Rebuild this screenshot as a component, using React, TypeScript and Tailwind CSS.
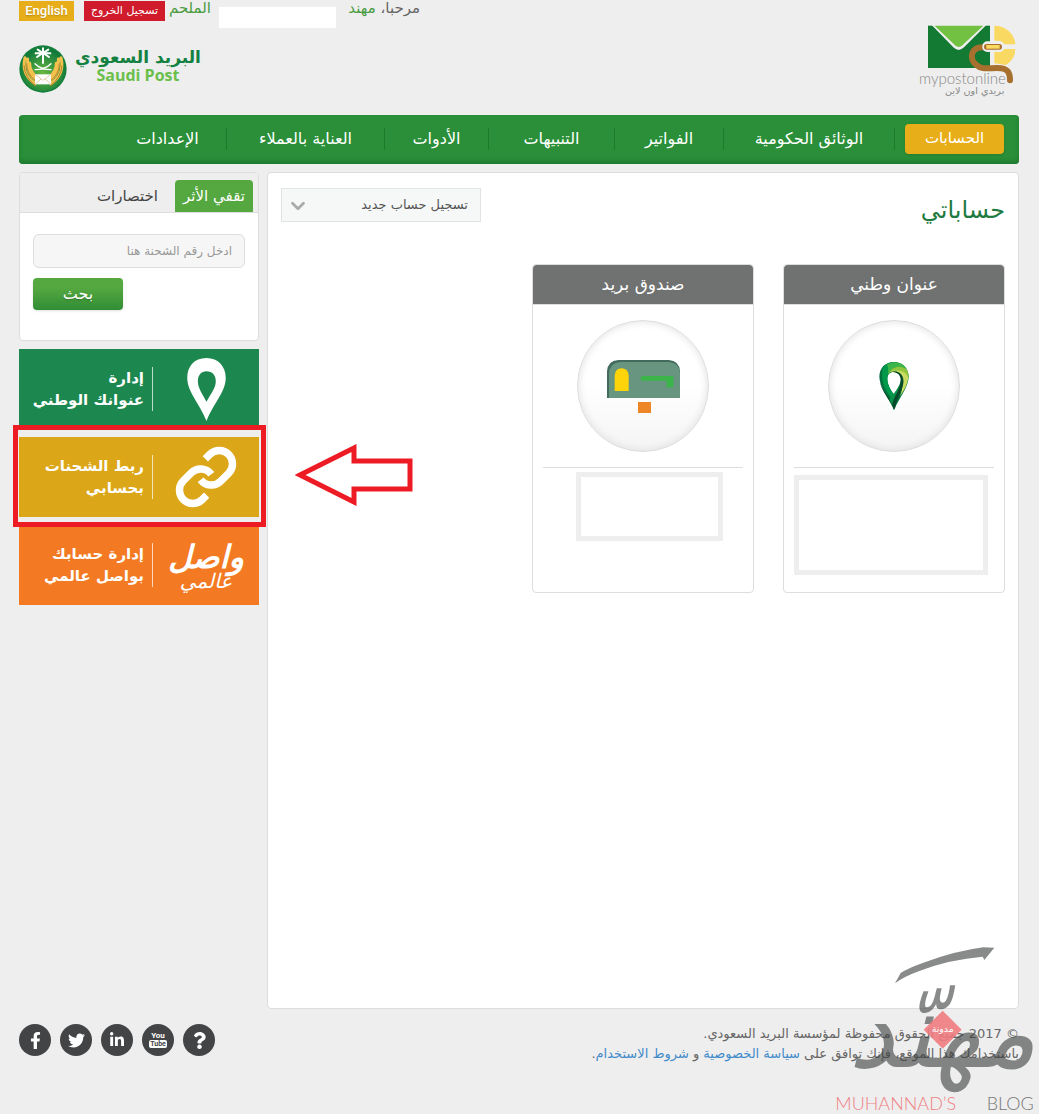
import React, { useState } from 'react';
import { ChevronDown, Link as LinkIcon } from 'lucide-react';
import { FaFacebookF, FaTwitter, FaLinkedinIn, FaQuestion } from 'react-icons/fa';

const navItems = [
  { label: 'الوثائق الحكومية', width: 'w-[171px]' },
  { label: 'الفواتير', width: 'w-[109px]' },
  { label: 'التنبيهات', width: 'w-[126px]' },
  { label: 'الأدوات', width: 'w-[104px]' },
  { label: 'العناية بالعملاء', width: 'w-[158px]' },
  { label: 'الإعدادات', width: 'w-[118px]' },
];

const MyPostLogo = () => (
  <svg viewBox="57 42 300 225" className="h-[75px] w-[100px]" direction="ltr" role="img" aria-label="mypostonline">
    <rect x="84" y="47" width="186" height="127" fill="#137a33" />
    <path d="M92 42L160 112Q176 128 192 112L262 42Z" fill="#eee" />
    <path d="M104 47L165 106Q176 116 187 106L250 47Z" fill="#72c143" />
    <path d="M283 47A63 60 0 0 1 346 103H312Q306 92 294 92H283Z" fill="#f9d962" />
    <path d="M346 117A63 58 0 0 1 318 165L283 160V126H294Q308 126 312 117Z" fill="#f9d962" />
    <path d="M254 112C212 108 206 146 228 164C246 180 262 174 292 174C324 174 330 188 330 211" fill="none" stroke="#a8702f" strokeWidth="18" strokeLinecap="round" />
    <rect x="247" y="94" width="66" height="32" rx="15" fill="#eee" />
    <rect x="252" y="102" width="54" height="17" rx="8" fill="#a8702f" />
    <rect x="259" y="105" width="40" height="11" fill="#f9d962" />
    <text x="57" y="222" fontSize="45" fontWeight="300" fill="#888" direction="ltr" className="font-['Lato',sans-serif]">mypostonline</text>
    <text x="313" y="252" fontSize="29" fill="#888" direction="rtl">بريدي اون لاين</text>
  </svg>
);

const Emblem = () => (
  <svg viewBox="0 0 144 144" className="h-12 w-12" aria-hidden="true">
    <defs>
      <radialGradient id="globe" cx="50%" cy="60%" r="55%">
        <stop offset="0" stopColor="#6ab844" />
        <stop offset="1" stopColor="#117a3a" />
      </radialGradient>
    </defs>
    <circle cx="72" cy="72" r="71" fill="#15803c" />
    <circle cx="72" cy="72" r="66" fill="url(#globe)" />
    <g fill="none" stroke="#f2c14e" strokeLinecap="round">
      <path d="M18 38Q6 88 48 116M26 42Q20 82 50 106M32 54Q32 78 52 96" strokeWidth="9" />
      <path d="M126 38Q138 88 96 116M118 42Q124 82 94 106M112 54Q112 78 92 96" strokeWidth="9" />
      <path d="M15 62Q18 100 50 122M129 62Q126 100 94 122M23 56Q22 86 50 108M121 56Q122 86 94 108" stroke="#b9822b" strokeWidth="3" />
    </g>
    <g stroke="#fff" strokeWidth="6" strokeLinecap="round" fill="none">
      <path d="M72 22V54M72 24L56 14M72 24L88 14M72 24L50 25M72 24L94 25M72 24L54 36M72 24L90 36M72 24V10" />
      <path d="M48 74Q78 74 96 56M96 74Q66 74 48 56" strokeWidth="4" />
    </g>
    <rect x="48" y="88" width="48" height="30" fill="#fff" />
    <path d="M48 88L72 106L96 88M48 118L66 102M96 118L78 102" fill="none" stroke="#d2b37a" strokeWidth="2" />
  </svg>
);

const AddressPin = () => (
  <svg viewBox="0 0 88 144" className="h-12 w-[30px]" aria-hidden="true">
    <path d="M44 0C16 0 0 20 0 44C0 74 30 110 44 144C58 110 88 74 88 44C88 20 70 0 44 0ZM44 30C57 30 64 38 64 52C64 68 52 84 42 96C32 84 24 68 24 50C24 38 32 30 44 30Z" fill="#00713c" fillRule="evenodd" />
    <path d="M10 18C20 4 36 -2 54 2C38 8 26 22 24 50C24 66 36 84 44 96L36 108C20 88 2 60 10 18Z" fill="#00984a" />
    <path d="M22 8C44 -6 72 0 82 22C64 10 36 12 26 40C24 26 30 14 22 8Z" fill="#3cb54a" />
    <path d="M28 34C36 14 64 8 82 22C88 32 88 42 87 50C78 26 50 18 28 34Z" fill="#8fc63e" />
    <path d="M34 28C56 20 78 26 87 46C84 72 70 90 62 104C76 66 70 38 34 28Z" fill="#c9dd60" />
    <path d="M36 29C58 22 76 40 72 64C68 90 52 110 48 136L44 144L34 118C50 98 66 74 64 50C60 36 50 30 36 29Z" fill="#06492a" />
    <path d="M2 58C8 84 28 104 42 128L36 126C20 100 4 80 2 58Z" fill="#06492a" />
    <path d="M30 112C44 92 54 80 62 64C58 92 42 106 38 130Z" fill="#079049" />
    <path d="M44 32C56 32 63 40 63 52C63 68 52 84 43 95C33 82 26 66 26 50C27 39 34 32 44 32Z" fill="#fff" />
  </svg>
);

const Mailbox = () => (
  <svg viewBox="0 0 219 159" className="h-[53px] w-[73px]" aria-hidden="true">
    <path d="M0 114V34Q2 2 34 0H185Q217 2 219 34V114Z" fill="#426b5e" />
    <path d="M6 114V40Q8 8 40 6H185Q217 8 219 38V114Z" fill="#67957f" />
    <path d="M23 93V46Q25 25 44 25Q63 25 65 46V93Z" fill="#fdd30a" />
    <path d="M105 48H199V82H179V62H105Q96 55 105 48Z" fill="#3bb54a" />
    <rect x="93" y="126" width="39" height="33" fill="#ec8626" />
  </svg>
);

const WhitePin = () => (
  <svg viewBox="0 0 116 190" className="h-[63px] w-[39px]" aria-hidden="true">
    <path d="M58 0C20 0 0 26 0 60C0 102 38 138 58 190C78 138 116 102 116 60C116 26 94 0 58 0ZM58 40C76 40 86 52 86 70C86 92 70 108 58 132C46 108 32 92 32 70C32 52 42 40 58 40Z" fill="#fff" fillRule="evenodd" />
  </svg>
);

const WaselLogo = () => (
  <div className="flex flex-col items-center text-white italic">
    <span className="text-[32px] leading-8 font-bold">واصل</span>
    <span className="text-xl leading-4">عالمي</span>
  </div>
);

const Watermark = () => (
  <svg viewBox="0 0 687 552" className="pointer-events-none absolute right-0 bottom-0 h-[184px] w-[229px]" role="img" aria-label="Muhannad's Blog">
    <g fill="#3c3f3e" opacity="0.6">
      <path d="M255 160L272 129Q290 116 340 98Q440 62 520 52L553 53L523 90L518 80Q420 88 330 122Q280 140 255 160Z" />
      <text x="680" y="412" fontSize="310" fontStyle="italic" direction="rtl">مهنّد</text>
    </g>
    <path d="M398 242L455 299L398 356L341 299Z" fill="#ee7b7f" opacity="0.9" />
    <text x="398" y="306" fontSize="28" fill="#fff" textAnchor="middle">مدونة</text>
    <g fontSize="54" fontWeight="300" direction="ltr" className="font-['Lato',sans-serif]">
      <text x="76" y="540" fill="#ee8084">MUHANNAD’S</text>
      <text x="530" y="540" fill="#777">BLOG</text>
    </g>
  </svg>
);

type CardProps = {
  title: string;
  icon: React.ReactNode;
  children: React.ReactNode;
};

const AccountCard = ({ title, icon, children }: CardProps) => (
  <article className="flex h-[329px] w-[222px] flex-col rounded border border-[#ddd] bg-white">
    <h2 className="flex h-10 items-center justify-center rounded-t-sm border-b border-[#ddd] bg-[#6f7270] text-[17px] text-white">{title}</h2>
    <div className="mx-auto mt-[15px] flex size-[132px] items-center justify-center rounded-full border border-[#ddd] bg-linear-to-b from-white from-50% to-[#f4f4f4] shadow-[inset_0_0_8px_#ddd]">
      {icon}
    </div>
    <div className="mx-[10px] mt-[15px] border-t border-[#ddd]">{children}</div>
  </article>
);

type BannerProps = {
  color: string;
  lines: string[];
  highlighted?: boolean;
  children: React.ReactNode;
};

const Banner = ({ color, lines, highlighted, children }: BannerProps) => (
  <a href="#" className={`relative flex h-20 items-center text-white ${color} ${highlighted ? 'z-10' : ''}`}>
    <span className="flex w-[106px] items-center justify-center">{children}</span>
    <span className="border-r border-white/70 pr-2 text-[15px] leading-[22px] font-bold">
      {lines.map((line) => (
        <span key={line} className="block whitespace-nowrap">{line}</span>
      ))}
    </span>
    {highlighted && (
      <span className="absolute -top-3 -right-[7px] -bottom-[10px] -left-[6px] border-5 border-[#ed1c24]" />
    )}
  </a>
);

const social = 'flex size-8 items-center justify-center rounded-full bg-[#434445] text-white';

const App = () => {
  const [tab, setTab] = useState('track');

  return (
    <div dir="rtl" className="relative min-h-screen overflow-hidden bg-[#eee] pr-5 pb-[49px] pl-[19px] font-['DejaVu_Sans',sans-serif] text-[#666]">
      <header className="flex h-[115px] justify-between">
        <a href="#" className="mt-6">
          <MyPostLogo />
        </a>
        <div className="flex w-[401px] flex-col">
          <div className="flex h-7 items-start text-[15px] leading-4">
            <p className="w-[84px] whitespace-nowrap">
              مرحبا، <span className="text-[#4b9b41]">مهند</span>
            </p>
            <span className="mt-[7px] h-[21px] w-[117px] bg-white" />
            <span className="mr-2 flex-1 text-[#4b9b41]">الملحم</span>
            <button type="button" className="mt-px h-5 w-[81px] bg-[#cf1b2b] text-[11px] leading-4 text-white">تسجيل الخروج</button>
            <button type="button" className="mt-px mr-[10px] h-5 w-[55px] bg-[#e7ae19] font-['Roboto',sans-serif] text-[13px] font-medium text-white text-shadow-sm">English</button>
          </div>
          <a href="#" dir="ltr" className="mt-[17px] flex items-center gap-2">
            <Emblem />
            <span className="flex flex-col items-center pb-2">
              <span className="text-[17px] leading-5 font-bold text-[#13813f]" dir="rtl">البريد السعودي</span>
              <span className="font-['Open_Sans',sans-serif] text-base leading-4 font-bold text-[#6abf4b]">Saudi Post</span>
            </span>
          </a>
        </div>
      </header>

      <nav className="flex h-[49px] items-center rounded bg-[#2a8f38] pr-[15px] pb-[2px] text-base text-white shadow-[inset_0_-3px_4px_#1f7a2f]">
        <a href="#" className="ml-[10px] flex h-[30px] w-[99px] items-center justify-center rounded bg-[#e7ae19] text-[15px] shadow-sm">الحسابات</a>
        {navItems.map((item) => (
          <a
            key={item.label}
            href="#"
            className={`flex h-[22px] items-center justify-center border-r border-[#1e7a2b] whitespace-nowrap ${item.width}`}
          >
            {item.label}
          </a>
        ))}
      </nav>

      <div className="mt-2 flex gap-2">
        <main className="relative min-h-[837px] flex-1 rounded border border-[#ddd] bg-white px-[13px] pt-[15px]">
          <div className="flex items-start justify-between">
            <h1 className="pt-1 text-2xl leading-9 text-[#1f7a3f]">حساباتي</h1>
            <div className="relative w-[200px]">
              <select aria-label="تسجيل حساب جديد" className="h-[34px] w-full appearance-none border border-[#e2e4e4] bg-[#f6f8f8] px-3 text-[13px] text-[#555]">
                <option>تسجيل حساب جديد</option>
              </select>
              <ChevronDown size={22} strokeWidth={3} className="pointer-events-none absolute top-[7px] left-[6px] text-[#aaa]" />
            </div>
          </div>

          <section className="mt-[36px] flex gap-[29px]">
            <AccountCard title="عنوان وطني" icon={<AddressPin />}>
              <div className="mt-[7px] mr-[6px] h-[100px] border-5 border-[#eee]" />
            </AccountCard>
            <AccountCard title="صندوق بريد" icon={<Mailbox />}>
              <div className="mt-1 mr-5 h-[69px] w-[147px] border-5 border-[#eee]" />
            </AccountCard>
          </section>

          <svg viewBox="0 0 118 62" className="absolute top-[271px] left-[27px] h-[62px] w-[118px]" aria-hidden="true">
            <path d="M5 31L59 4V17H115V45H59V58Z" fill="#fff" stroke="#ed1c24" strokeWidth="5" />
          </svg>
        </main>

        <aside className="flex w-60 flex-col gap-2">
          <section className="h-[169px] rounded border border-[#ddd] bg-white">
            <div role="tablist" className="flex h-10 items-end rounded-t border-b border-[#ddd] bg-[#eee] pr-[5px] text-[15px]">
              <button
                type="button"
                role="tab"
                aria-selected={tab === 'track'}
                onClick={() => setTab('track')}
                className={`h-8 w-[78px] rounded-t whitespace-nowrap ${tab === 'track' ? 'bg-[#55a840] text-white' : 'text-[#444]'}`}
              >
                تقفي الأثر
              </button>
              <button
                type="button"
                role="tab"
                aria-selected={tab === 'shortcuts'}
                onClick={() => setTab('shortcuts')}
                className={`mr-[7px] h-8 rounded-t px-[10px] ${tab === 'shortcuts' ? 'bg-[#55a840] text-white' : 'text-[#444]'}`}
              >
                اختصارات
              </button>
            </div>
            <form className="flex flex-col items-end gap-[10px] px-[13px] pt-[21px]" onSubmit={(e) => e.preventDefault()}>
              <input
                type="text"
                aria-label="رقم الشحنة"
                placeholder="ادخل رقم الشحنة هنا"
                className="h-[34px] w-full rounded-md border border-[#ddd] bg-[#f6f6f6] px-3 text-xs placeholder:text-[#999]"
              />
              <button type="submit" className="h-8 w-[90px] rounded-sm bg-linear-to-b from-[#55a840] from-30% to-[#2f8d35] text-base text-white shadow-sm text-shadow-sm">
                بحث
              </button>
            </form>
          </section>

          <Banner color="bg-[#1c8850]" lines={['إدارة', 'عنوانك الوطني']}>
            <WhitePin />
          </Banner>
          <Banner color="bg-[#dba617]" lines={['ربط الشحنات', 'بحسابي']} highlighted>
            <LinkIcon size={64} strokeWidth={2.8} strokeLinecap="butt" />
          </Banner>
          <Banner color="bg-[#f37a23]" lines={['إدارة حسابك', 'بواصل عالمي']}>
            <WaselLogo />
          </Banner>
        </aside>
      </div>

      <footer className="mt-[15px] flex items-start justify-between">
        <div className="text-[13px] leading-5">
          <p>© 2017 جميع الحقوق محفوظة لمؤسسة البريد السعودي.</p>
          <p>
            باستخدامك هذا الموقع، فإنك توافق على <a href="#" className="text-[#428bca]">سياسة الخصوصية</a> و <a href="#" className="text-[#428bca]">شروط الاستخدام</a>.
          </p>
        </div>
        <div dir="ltr" className="flex gap-[9px]">
          <a href="#" aria-label="Facebook" className={social}><FaFacebookF size={17} /></a>
          <a href="#" aria-label="Twitter" className={social}><FaTwitter size={17} /></a>
          <a href="#" aria-label="LinkedIn" className={social}><FaLinkedinIn size={16} /></a>
          <a href="#" className={`${social} flex-col font-['Roboto',sans-serif] text-[8px] leading-2 font-bold`}>
            <span>You</span>
            <span className="rounded-xs bg-white px-px text-[7px] text-[#434445]">Tube</span>
          </a>
          <a href="#" aria-label="Help" className={social}><FaQuestion size={17} /></a>
        </div>
      </footer>

      <Watermark />
    </div>
  );
};

export default App;
